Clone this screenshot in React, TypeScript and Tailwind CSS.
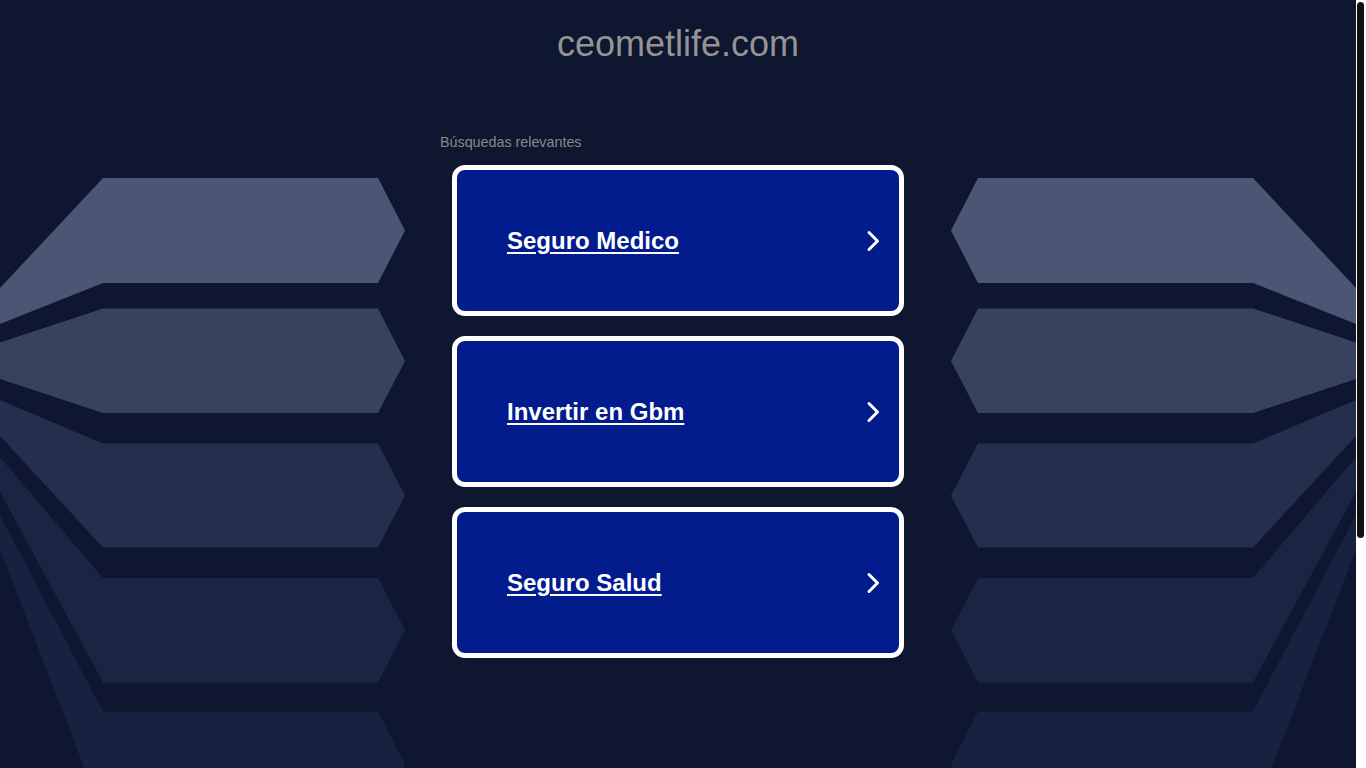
import { useEffect } from 'react';

const links = ['Seguro Medico', 'Invertir en Gbm', 'Seguro Salud'];

// decorative side panels, left half; right half is mirrored
const Bands = () => (
  <svg
    className="absolute left-0 top-0 pointer-events-none"
    width="1356"
    height="830"
    viewBox="0 0 1356 830"
  >
    <g>
      <polygon fill="#4a5674" points="103,178 378,178 405,230.5 378,283 103,283 0,324 0,288" />
      <polygon fill="#37425f" points="103,308.5 378,308.5 405,361 378,413 103,413 0,379 0,342.5" />
      <polygon fill="#242f4d" points="103,443.5 378,443.5 405,495.5 378,547.5 103,547.5 0,436 0,400" />
      <polygon fill="#1a2443" points="103,578 378,578 405,630 378,682.5 103,682.5 0,492 0,457" />
      <polygon fill="#172140" points="103,711.5 378,711.5 405,764 378,816 103,816 0,549.5 0,515" />
    </g>
    <g transform="translate(1356,0) scale(-1,1)">
      <polygon fill="#4a5674" points="103,178 378,178 405,230.5 378,283 103,283 0,324 0,288" />
      <polygon fill="#37425f" points="103,308.5 378,308.5 405,361 378,413 103,413 0,379 0,342.5" />
      <polygon fill="#242f4d" points="103,443.5 378,443.5 405,495.5 378,547.5 103,547.5 0,436 0,400" />
      <polygon fill="#1a2443" points="103,578 378,578 405,630 378,682.5 103,682.5 0,492 0,457" />
      <polygon fill="#172140" points="103,711.5 378,711.5 405,764 378,816 103,816 0,549.5 0,515" />
    </g>
  </svg>
);

const Chevron = () => (
  <svg width="14" height="22" viewBox="0 0 14 22" fill="none" className="shrink-0">
    <path d="M3 2.5 L11.5 11 L3 19.5" stroke="#ffffff" strokeWidth="3" strokeLinecap="round" strokeLinejoin="round" />
  </svg>
);

export default function App() {
  useEffect(() => {
    document.title = 'ceometlife.com';
  }, []);

  return (
    <div
      className="h-screen flex overflow-hidden bg-[#0e1630]"
      style={{ fontFamily: '"Liberation Sans", Arial, sans-serif' }}
    >
      <div className="relative flex-1 min-h-[1100px]">
        <Bands />
        <div className="relative flex flex-col items-center">
          <h1 className="mt-[23px] text-[36px] leading-[41px] text-[#949494] font-normal">ceometlife.com</h1>

          <div className="mt-[70px] w-[476px] flex flex-col">
            <p className="text-[14.3px] leading-4 text-[#8a8a8a]">Búsquedas relevantes</p>
            <div className="mt-[15px] flex flex-col gap-5 px-3">
              {links.map((l) => (
                <a
                  key={l}
                  href="#"
                  className="h-[151px] rounded-[13px] border-[5px] border-white bg-[#021b8d] flex items-center justify-between pl-[50px] pr-[19px]"
                >
                  <span className="text-[24px] leading-7 font-bold text-white underline underline-offset-[3px] decoration-2">
                    {l}
                  </span>
                  <Chevron />
                </a>
              ))}
            </div>
          </div>
        </div>
      </div>

      {/* page scrollbar */}
      <div className="w-[10px] shrink-0 bg-white pt-[2px] pl-[1px]">
        <div className="h-[536px] w-[7px] rounded-[4px] bg-[#111111]" />
      </div>
    </div>
  );
}
